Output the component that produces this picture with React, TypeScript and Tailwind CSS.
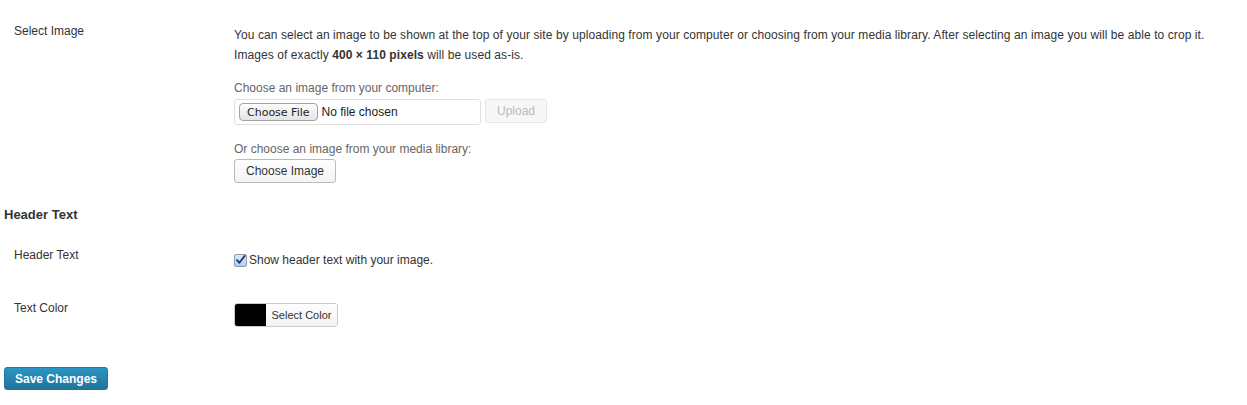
export default function App() {
  return (
    <div className="min-h-[405px] bg-white px-[4px] pt-[20px] font-['Liberation_Sans',Arial,sans-serif] text-[12px] text-[#333]">
      {/* Select Image */}
      <div className="grid grid-cols-[230px_1fr]">
        <div className="pl-[10px] pt-[1px] text-[12px] leading-[20px]">Select Image</div>
        <div>
          <p className="mt-[5px] leading-[20px] tracking-[0.08px]">
            You can select an image to be shown at the top of your site by uploading from your computer or choosing from your media library. After selecting an image you will be able to crop it.
            <br />
            Images of exactly <strong className="font-bold">400 × 110 pixels</strong> will be used as-is.
          </p>

          <p className="mt-[13px] leading-[20px] text-[#666]">Choose an image from your computer:</p>
          <div className="mt-[1px] flex items-start gap-[4px]">
            <div className="flex h-[26px] w-[247px] items-center rounded-[3px] border border-[#dfdfdf] bg-white pl-[4px]">
              <span className="flex h-[18px] items-center rounded-[4px] border border-[#a3a3a3] bg-gradient-to-b from-[#fdfdfd] to-[#e4e4e4] px-[7px] font-['DejaVu_Sans',sans-serif] text-[11px] leading-none text-[#222]">
                Choose File
              </span>
              <span className="ml-[4px] text-[12px] text-[#222]">No file chosen</span>
            </div>
            <button className="h-[24px] rounded-[3px] border border-[#e6e6e6] bg-[#f7f7f7] px-[11px] text-[12px] text-[#bbb]">
              Upload
            </button>
          </div>

          <p className="mt-[14px] leading-[20px] text-[#666]">Or choose an image from your media library:</p>
          <button className="h-[24px] rounded-[3px] border border-[#bbb] bg-gradient-to-b from-[#fefefe] to-[#f4f4f4] px-[11px] text-[12px] text-[#333]">
            Choose Image
          </button>
        </div>
      </div>

      {/* Header Text section */}
      <h3 className="mt-[22px] text-[13px] font-bold leading-[20px] text-[#333]">Header Text</h3>

      <div className="mt-[20px] grid grid-cols-[230px_1fr]">
        <div className="leading-[20px] pl-[10px]">Header Text</div>
        <label className="mt-[5px] flex items-center leading-[20px]">
          <span className="mr-[2px] flex h-[13px] w-[13px] items-center justify-center rounded-[2px] border border-[#8a9bb5] bg-gradient-to-b from-[#dfe9f7] to-[#b8cbe6]">
            <svg viewBox="0 0 12 12" className="h-[12px] w-[12px]">
              <path d="M2.2 6.2 L4.8 9 L10.6 1.6" fill="none" stroke="#1d3f7a" strokeWidth="2.1" strokeLinecap="round" strokeLinejoin="round" />
            </svg>
          </span>
          Show header text with your image.
        </label>
      </div>

      <div className="mt-[28px] grid grid-cols-[230px_1fr]">
        <div className="pl-[10px] leading-[20px]">Text Color</div>
        <div className="mt-[5px] flex h-[24px] w-[104px] overflow-hidden rounded-[3px] border border-[#ccc]">
          <span className="w-[31px] bg-black" />
          <span className="flex flex-1 items-center justify-center bg-gradient-to-b from-[#fefefe] to-[#f2f2f2] text-[11px] text-[#333]">
            Select Color
          </span>
        </div>
      </div>

      <button className="mt-[40px] h-[23px] rounded-[3px] border border-[#21759b] bg-gradient-to-b from-[#2a95c5] to-[#21759b] px-[10px] text-[12px] font-bold text-white">
        Save Changes
      </button>
    </div>
  );
}
